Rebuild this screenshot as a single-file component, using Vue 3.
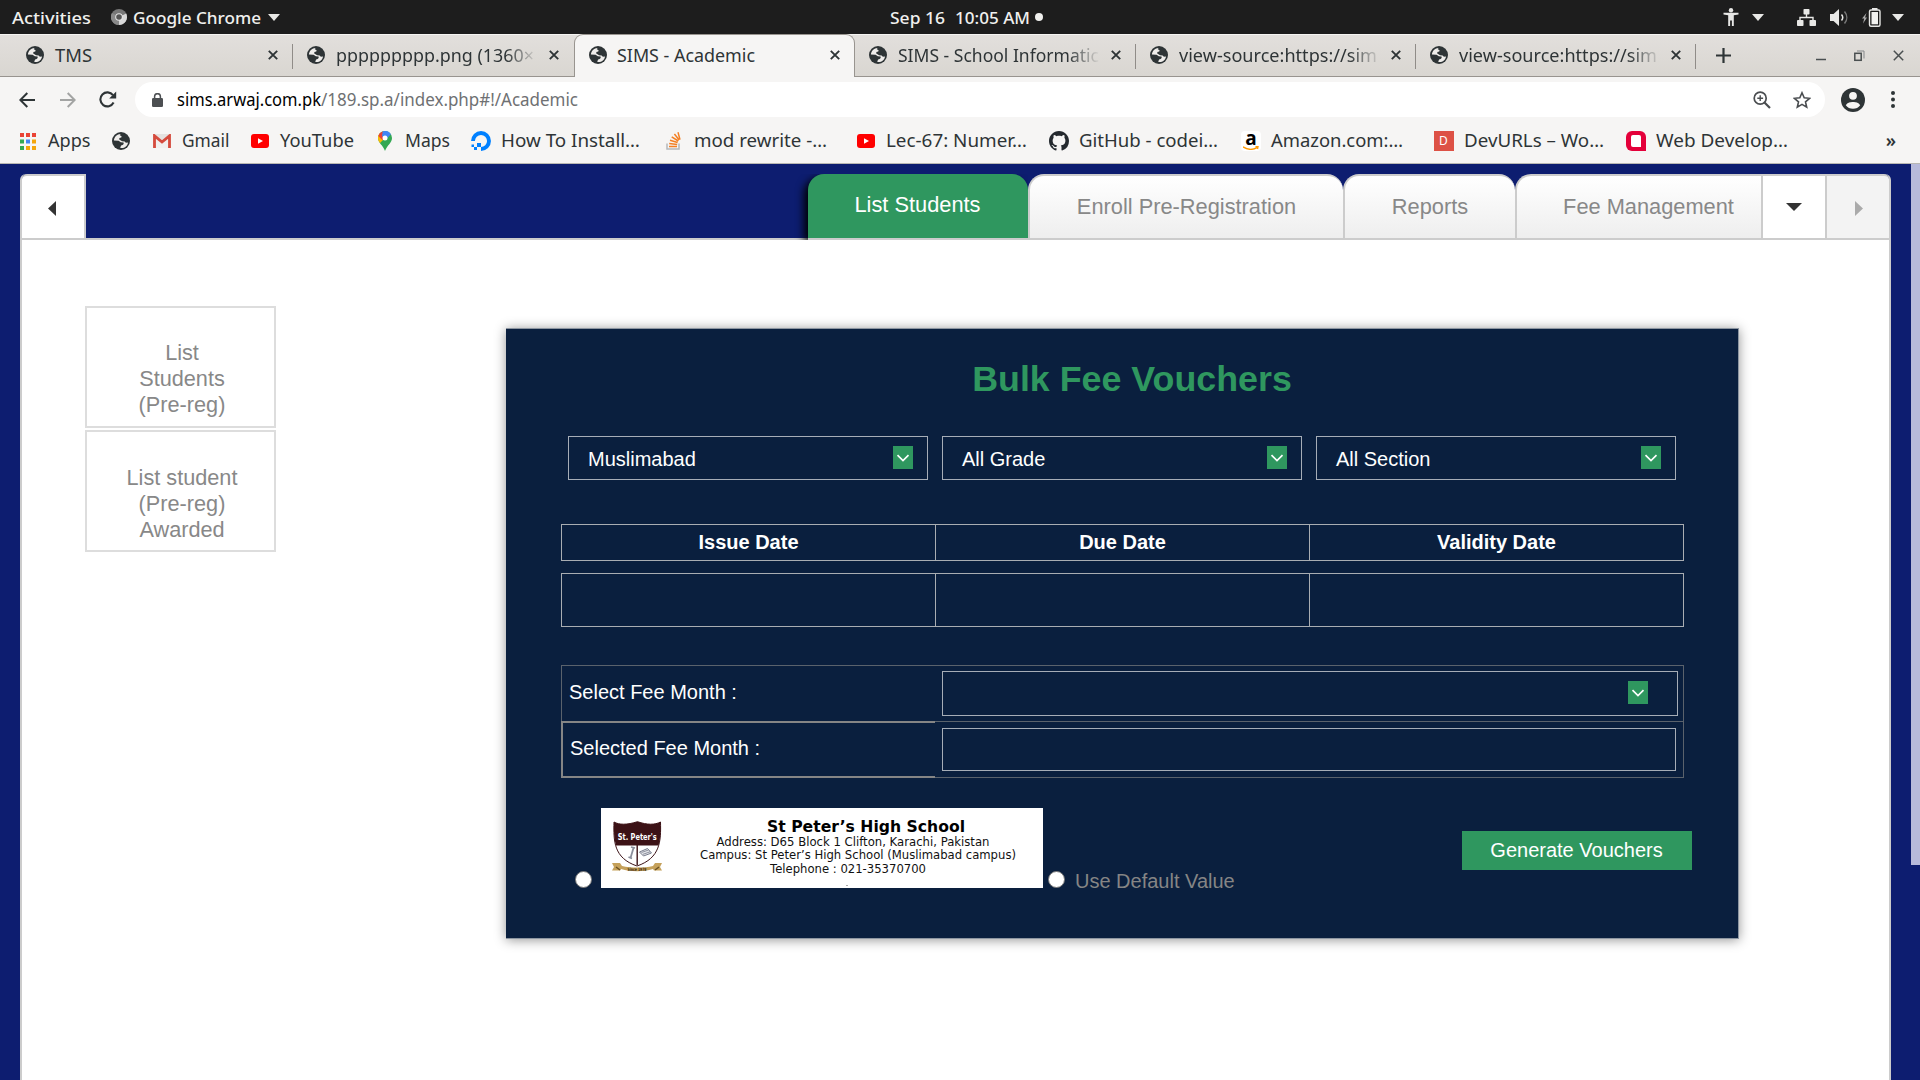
<script setup>
import { h } from 'vue'

// Text run with a fixed advance width, so labels keep the desktop font's metrics
const Run = (props) =>
  h('svg', { width: props.w, height: 20, class: 'run', overflow: 'visible' }, [
    h('text', { x: 0, y: props.y || 17, textLength: props.w, lengthAdjust: 'spacingAndGlyphs', fill: 'currentColor' }, props.t),
  ])
Run.props = ['w', 't', 'y']

const Globe = () =>
  h('svg', { width: 18, height: 18, viewBox: '0 0 18 18' }, [
    h('circle', { cx: 9, cy: 9, r: 9, fill: '#2e3436' }),
    h('path', { fill: '#efedeb', d: 'M8.6 1.9C5 2.1 2 5 1.9 8.6l4.7.1 2.2 1.6 2.7.1c.5.9 0 2-.9 2.5l-1.5.6-.9 2.3c3.7.9 7.4-1.700 7.800-5.400l-2.100.4-1.300-1.400-2.500-.1L8.500 8.300 7.200 7.600l.2-1.500 1.900-.5.3-1.400-1.800-.9z' }),
    h('path', { fill: '#2e3436', d: 'M2 9.500l3.200 1.500 1.500 3.900-1.300.500C3.400 14.200 2.200 12 2 9.500z' }),
  ])

const Chevron = () =>
  h('svg', { class: 'chev', width: 20, height: 23, viewBox: '0 0 20 23' }, [
    h('rect', { width: 20, height: 23, fill: '#2f975f' }),
    h('path', { d: 'M4.500 9.200L10 14.500l5.500-5.300', fill: 'none', stroke: '#fff', 'stroke-width': 1.700 }),
  ])

const tabs = [
  { t: 'TMS', w: 37 },
  { t: 'ppppppppp.png (1360×', w: 198, fade: true, sep: true },
  { t: 'SIMS - Academic', w: 138, active: true },
  { t: 'SIMS - School Informatic', w: 201, fade: true },
  { t: 'view-source:https://sim', w: 198, fade: true, sep: true },
  { t: 'view-source:https://sim', w: 198, fade: true, sep: true },
]

const marks = [
  { i: 'apps', t: 'Apps', w: 42.5 },
  { i: 'globe' },
  { i: 'gmail', t: 'Gmail', w: 47.5 },
  { i: 'yt', t: 'YouTube', w: 74 },
  { i: 'maps', t: 'Maps', w: 45 },
  { i: 'do', t: 'How To Install…', w: 139, cut: true },
  { i: 'so', t: 'mod rewrite -…', w: 133, cut: true },
  { i: 'yt', t: 'Lec-67: Numer…', w: 141, cut: true },
  { i: 'gh', t: 'GitHub - codei…', w: 139, cut: true },
  { i: 'amz', t: 'Amazon.com:…', w: 132, cut: true },
  { i: 'dev', t: 'DevURLs – Wo…', w: 140, cut: true },
  { i: 'web', t: 'Web Develop…', w: 132, cut: true },
]
const appDots = ['#ea4335', '#ea4335', '#ea4335', '#34a853', '#4285f4', '#f4a60b', '#34a853', '#f4a60b', '#f4a60b']
const filters = ['Muslimabad', 'All Grade', 'All Section']
const dates = ['Issue Date', 'Due Date', 'Validity Date']
</script>

<template>
  <div class="screen">
    <header class="topbar">
      <Run class="activities" :w="79" t="Activities" />
      <svg class="chrome" width="16" height="16" viewBox="0 0 16 16">
        <circle cx="8" cy="8" r="8" fill="#777" />
        <path d="M8 8L15.200 4.500A8 8 0 0 1 8 16z" fill="#d8d8d8" />
        <path d="M8 8L1 4A8 8 0 0 0 8 16z" fill="#8a8a8a" />
        <circle cx="8" cy="8" r="3.800" fill="#e4e4e4" />
        <circle cx="8" cy="8" r="2.800" fill="#555" />
      </svg>
      <Run :w="128" t="Google Chrome" />
      <svg class="tri first" width="12" height="7"><path d="M0 0h12L6 7z" fill="#e8e8e6" /></svg>
      <div class="clock">
        <Run :w="55" t="Sep 16" />
        <Run :w="75" t="10:05 AM" />
        <i class="dot"></i>
      </div>
      <div class="tray">
        <svg width="16" height="18" viewBox="0 0 16 18" fill="#e8e8e6">
          <circle cx="8" cy="2.200" r="2.200" /><path d="M0.500 4.800h15v1.800l-4.700.600V18H8.900v-5.500H7.100V18H5.200V7.200L.5 6.600z" />
        </svg>
        <svg class="tri" width="12" height="7"><path d="M0 0h12L6 7z" fill="#e8e8e6" /></svg>
        <svg class="net" width="19" height="17" viewBox="0 0 19 17" fill="#e8e8e6">
          <rect x="6.500" width="6" height="5.500" rx=".8" /><rect y="11" width="6.500" height="6" rx=".8" /><rect x="12.500" y="11" width="6.500" height="6" rx=".8" />
          <path d="M9.500 5v3.500M3 11V8.500h13V11" fill="none" stroke="#e8e8e6" stroke-width="1.400" />
        </svg>
        <svg class="vol" width="19" height="17" viewBox="0 0 19 17">
          <path d="M0 5h3.500L9 0v17l-5.500-5H0z" fill="#e8e8e6" />
          <path d="M11.500 5.500c1.500 1.800 1.500 4.200 0 6" fill="none" stroke="#e8e8e6" stroke-width="1.500" />
          <path d="M14.500 2.500c3 3.600 3 8.400 0 12" fill="none" stroke="#777" stroke-width="1.500" />
        </svg>
        <svg class="bat" width="19" height="19" viewBox="0 0 19 19">
          <path d="M4.500 5L0 10.500h2.200L1 15.500 5 9.500H3z" fill="#aaa" />
          <rect x="7.500" y="2" width="10.500" height="16.300" rx="1.500" fill="none" stroke="#e8e8e6" stroke-width="1.400" />
          <rect x="10" y="0" width="5.500" height="2" fill="#e8e8e6" /><rect x="9.500" y="4" width="6.500" height="12.300" fill="#f2f2f0" />
        </svg>
        <svg class="tri" width="12" height="7"><path d="M0 0h12L6 7z" fill="#e8e8e6" /></svg>
      </div>
    </header>

    <nav class="tabstrip">
      <div v-for="(tab, n) in tabs" :key="n" class="tab" :class="{ active: tab.active, sep: tab.sep }">
        <Globe />
        <div class="tab-title" :class="{ fade: tab.fade }"><Run :w="tab.w" :t="tab.t" /></div>
        <svg class="x" width="10" height="10" viewBox="0 0 10 10"><path d="M.8.8l8.400 8.400M9.200.8L.8 9.200" stroke="#2e3436" stroke-width="1.900" /></svg>
      </div>
      <div class="newtab">
        <svg width="15" height="15" viewBox="0 0 15 15"><path d="M7.500 0v15M0 7.500h15" stroke="#2e3436" stroke-width="2.200" /></svg>
      </div>
      <div class="winbtns">
        <svg width="10" height="14"><path d="M0 10.500h10" stroke="#4a4f50" stroke-width="1.500" /></svg>
        <svg width="11" height="12" viewBox="0 0 11 12" fill="none" stroke="#4a4f50"><rect x=".8" y="3.300" width="6.400" height="7" stroke-width="1.500" /><path d="M3 1h7v7.500" stroke="#85888a" /></svg>
        <svg width="11" height="11" viewBox="0 0 11 11"><path d="M.8.8l9.400 9.400M10.200.8L.8 10.200" stroke="#4a4f50" stroke-width="1.500" /></svg>
      </div>
    </nav>

    <div class="toolbar">
      <svg width="16" height="16" viewBox="0 0 16 16" fill="none" stroke="#2e3436" stroke-width="2"><path d="M16 8H1.500M8.300 1L1.300 8l7 7" /></svg>
      <svg class="fwd" width="16" height="16" viewBox="0 0 16 16" fill="none" stroke="#a3a4a3" stroke-width="2"><path d="M0 8h14.500M7.700 1l7 7-7 7" /></svg>
      <svg class="reload" width="18" height="17" viewBox="0 0 18 17"><path d="M14.600 11.600a7 7 0 1 1-.6-7.400" fill="none" stroke="#2e3436" stroke-width="2.100" /><path d="M17.200.5v7h-7z" fill="#2e3436" /></svg>
      <div class="omnibox">
        <svg width="11" height="14" viewBox="0 0 11 14"><rect y="5" width="11" height="9" rx="1.300" fill="#4c4f52" /><path d="M2.600 6V3.600a2.900 2.900 0 0 1 5.800 0V6" fill="none" stroke="#4c4f52" stroke-width="1.500" /></svg>
        <div class="url"><Run class="host" :w="144" :y="16" t="sims.arwaj.com.pk" /><Run class="path" :w="257" :y="16" t="/189.sp.a/index.php#!/Academic" /></div>
        <svg class="mag" width="18" height="18" viewBox="0 0 18 18" fill="none" stroke="#4a4d50" stroke-width="1.700"><circle cx="7.200" cy="7.200" r="6" /><path d="M11.500 11.500l5.500 5.500" stroke-width="2.200" /><path d="M7.200 4.300v5.800M4.300 7.200h5.800" stroke-width="1.400" /></svg>
        <svg width="18" height="18" viewBox="0 0 18 18"><path d="M9 1.800l2.200 5 5.400.5-4.100 3.600 1.200 5.300L9 13.400l-4.700 2.800 1.200-5.300-4.100-3.600 5.400-.5z" fill="none" stroke="#4a4d50" stroke-width="1.600" /></svg>
      </div>
      <svg class="avatar" width="24" height="24" viewBox="0 0 24 24"><circle cx="12" cy="12" r="12" fill="#2e3436" /><circle cx="12" cy="7.800" r="3.900" fill="#f6f5f4" /><path d="M4.800 17.300c1.200-2.800 4.500-3.400 7.200-3.400s6 .6 7.200 3.400c-1.700 2.400-4.300 3.500-7.200 3.500s-5.500-1.100-7.200-3.500z" fill="#f6f5f4" /></svg>
      <svg class="dots" width="4" height="17" fill="#2e3436"><circle cx="2" cy="2" r="2" /><circle cx="2" cy="8.500" r="2" /><circle cx="2" cy="15" r="2" /></svg>
    </div>

    <div class="bookmarks">
      <div v-for="(m, n) in marks" :key="n" class="mark">
        <span class="ico">
          <svg v-if="m.i === 'apps'" width="16" height="17" viewBox="0 0 16 17"><rect v-for="(c, k) in appDots" :key="k" :x="(k % 3) * 6" :y="Math.floor(k / 3) * 6.5" width="4" height="4" :fill="c" /></svg>
          <Globe v-else-if="m.i === 'globe'" />
          <svg v-else-if="m.i === 'gmail'" width="18" height="14" viewBox="0 0 18 14"><rect width="18" height="14" rx="1" fill="#e4e2e0" /><path d="M3 14V4l6 5 6-5v10" fill="#f1efee" /><path d="M1.500 14V1.800L9 8l7.500-6.200V14" fill="none" stroke="#d54b3d" stroke-width="2.800" /></svg>
          <svg v-else-if="m.i === 'yt'" width="18" height="14" viewBox="0 0 18 14"><rect width="18" height="14" rx="3" fill="#f00" /><path d="M7 4.200v5.600L12 7z" fill="#fff" /></svg>
          <svg v-else-if="m.i === 'maps'" width="14" height="20" viewBox="0 0 14 20"><path d="M7 0a7 7 0 0 0-7 7c0 5 5 7 7 13 2-6 7-8 7-13a7 7 0 0 0-7-7z" fill="#34a853" /><path d="M1.600 2.500L7 7l-5 5C.8 10.500 0 9 0 7a7 7 0 0 1 1.600-4.500z" fill="#fbbc04" /><path d="M1.600 2.500A7 7 0 0 1 4.700.4L7 6 4.300 9 .3 5z" fill="#ea4335" /><path d="M4.700.4a7 7 0 0 1 8.200 2.800L7.500 9 4 5z" fill="#4285f4" /><circle cx="7" cy="7" r="2.500" fill="#fff" /></svg>
          <svg v-else-if="m.i === 'do'" width="20" height="20" viewBox="0 0 20 20"><path d="M10 18a8 8 0 1 0-8-8" fill="none" stroke="#0080ff" stroke-width="3.900" /><path d="M6 12h4v4H6zM3 16h3v3H3zM.5 13.500H3V16H.5z" fill="#0080ff" /></svg>
          <svg v-else-if="m.i === 'so'" width="16" height="18" viewBox="0 0 16 18" fill="none"><path d="M1 11.500V17h12v-5.500" stroke="#b5b8bb" stroke-width="1.500" /><path d="M3 14.500h8M3.200 11.600l8 .8M4 8.300l7.600 2.200M5.700 4.900l6.600 4.100M8.400 2l4.800 6M12 .2l2 7.400" stroke="#f48024" stroke-width="1.500" /></svg>
          <svg v-else-if="m.i === 'gh'" width="20" height="20" viewBox="0 0 16 16"><path fill="#24292e" d="M8 0C3.580 0 0 3.580 0 8c0 3.540 2.290 6.530 5.470 7.590.4.070.55-.17.55-.38 0-.19-.01-.82-.01-1.490-2.010.37-2.530-.49-2.690-.94-.09-.23-.48-.94-.82-1.130-.28-.15-.68-.52-.01-.53.63-.01 1.080.58 1.230.82.72 1.210 1.870.87 2.330.66.070-.52.28-.87.51-1.070-1.780-.2-3.640-.89-3.640-3.950 0-.87.31-1.590.82-2.150-.08-.2-.36-1.020.08-2.120 0 0 .67-.21 2.200.82.64-.18 1.320-.27 2-.27s1.360.09 2 .27c1.530-1.040 2.200-.82 2.200-.82.44 1.100.16 1.920.08 2.120.51.56.82 1.270.82 2.150 0 3.070-1.870 3.750-3.650 3.950.29.25.54.73.54 1.480 0 1.070-.01 1.930-.01 2.200 0 .21.15.46.55.38A8.010 8.010 0 0 0 16 8c0-4.420-3.580-8-8-8z" /></svg>
          <span v-else-if="m.i === 'amz'" class="amz"><b>a</b><svg width="16" height="4" viewBox="0 0 16 4"><path d="M0 .8c4.500 3 10 3 14 .8M12.500.5h2.500l-.5 2.500" fill="none" stroke="#f90" stroke-width="1.400" /></svg></span>
          <span v-else-if="m.i === 'dev'" class="dev">D</span>
          <svg v-else width="20" height="20" viewBox="0 0 20 20"><path d="M6 0h8a6 6 0 0 1 6 6v14H6a6 6 0 0 1-6-6V6a6 6 0 0 1 6-6z" fill="#e4003a" /><path d="M7 4h6a2 2 0 0 1 2 2v10H7a2 2 0 0 1-2-2V6a2 2 0 0 1 2-2z" fill="#fff" /></svg>
        </span>
        <span v-if="m.t" class="mark-label" :class="{ cut: m.cut }"><Run :w="m.w" :y="16" :t="m.t" /></span>
      </div>
      <span class="more">»</span>
    </div>

    <main class="page">
      <div class="panel">
        <div class="ptabs">
          <div class="pbtn prev"><svg width="8" height="15"><path d="M8 0v15L0 7.500z" fill="#333" /></svg></div>
          <div class="ptab on">List Students</div>
          <div class="ptab enroll">Enroll Pre-Registration</div>
          <div class="ptab reports">Reports</div>
          <div class="ptab fee">Fee Management</div>
          <div class="pbtn drop"><svg width="16" height="8"><path d="M0 0h16L8 8z" fill="#333" /></svg></div>
          <div class="pbtn next"><svg width="8" height="15"><path d="M0 0v15l8-7.500z" fill="#aaa" /></svg></div>
        </div>
        <div class="pbody">
          <aside>
            <div class="side">List<br />Students<br />(Pre-reg)</div>
            <div class="side">List student<br />(Pre-reg)<br />Awarded</div>
          </aside>
          <section class="card">
            <h1>Bulk Fee Vouchers</h1>
            <div class="filters">
              <div v-for="f in filters" :key="f" class="select">{{ f }}<Chevron /></div>
            </div>
            <div class="grid head"><div v-for="d in dates" :key="d">{{ d }}</div></div>
            <div class="grid vals"><div v-for="d in dates" :key="d"></div></div>
            <div class="fees">
              <div class="frow"><div class="flabel">Select Fee Month :</div><div class="fcell"><div class="fsel"><Chevron /></div></div></div>
              <div class="frow"><div class="flabel thick">Selected Fee Month :</div><div class="fcell"><div class="finp"></div></div></div>
            </div>
            <div class="foot">
              <i class="radio"></i>
              <svg class="banner" width="441.500" height="80" viewBox="0 0 441.500 80">
                <rect width="442" height="80" fill="#fff" />
                <path d="M13 14c5 3 13 3 23.500-.3C46 17 54 17 59.500 14c.5 19 0 36-23.500 44C12.500 50 12.500 33 13 14z" fill="#fff" stroke="#3c1216" stroke-width="1" />
                <path d="M13 14c5 3 13 3 23.500-.3C46 17 54 17 59.500 14c.3 9 0 17-2 23.500H15C13 31 12.700 23 13 14z" fill="#3c1216" />
                <path d="M36.200 37v20" stroke="#3c1216" stroke-width="1.400" />
                <path d="M32.500 40l-3 10M30 39l4 1M27.500 49l3.500 1.500" stroke="#8b8f9c" stroke-width="1.800" fill="none" />
                <path d="M38.500 44l8-3.500 4 4.500-8 3z" fill="#e5e6ea" stroke="#777c8c" stroke-width="1" />
                <path d="M40.500 44.500l7-2.500M42 46.300l7-2.500" stroke="#777c8c" stroke-width=".8" />
                <path d="M11 55h8l2 3c9 2 22 2 31 0l2-3h7l-2 4 2 3.500h-8l-1-1.500c-10 3-22 3-32 0l-1 1.500h-8l2-3.500z" fill="#c5a15b" />
                <path d="M15 59l4 3M54 62l4-3" stroke="#6b5122" stroke-width="1.500" />
                <text x="36.300" y="31.500" class="crest" textLength="39" lengthAdjust="spacingAndGlyphs">St. Peter's</text>
                <text x="36" y="62.800" class="since" textLength="19" lengthAdjust="spacingAndGlyphs">Since 1978</text>
                <text x="265" y="24" class="school" textLength="198" lengthAdjust="spacingAndGlyphs">St Peter’s High School</text>
                <text x="252" y="37.500" class="line" textLength="273" lengthAdjust="spacingAndGlyphs">Address: D65 Block 1 Clifton, Karachi, Pakistan</text>
                <text x="257" y="51.400" class="line" textLength="316" lengthAdjust="spacingAndGlyphs">Campus: St Peter’s High School (Muslimabad campus)</text>
                <text x="247" y="65.300" class="line" textLength="156" lengthAdjust="spacingAndGlyphs">Telephone : 021-35370700</text>
                <rect x="245" y="77" width="2" height="1" fill="#aaa" />
              </svg>
              <i class="radio second"></i>
              <span class="default">Use Default Value</span>
              <button class="go">Generate Vouchers</button>
            </div>
          </section>
        </div>
      </div>
      <div class="thumb"></div>
    </main>
  </div>
</template>

<style>
body { margin: 0; overflow: hidden; }
</style>

<style scoped>
* { box-sizing: border-box; }
svg { display: block; flex: none; }
.screen { width: 1920px; height: 1080px; overflow: hidden; display: flex; flex-direction: column; font-family: "Noto Sans", sans-serif; font-size: 18px; color: #2e3436; }
.topbar { height: 34px; flex: none; background: #1d1d1d; color: #f0f0ee; display: flex; align-items: center; padding-left: 12px; font-size: 15.5px; font-weight: 500; }
.chrome { margin: 0 6px 0 20px; }
.tri.first { margin-left: 7px; }
.clock { margin-left: 610px; display: flex; align-items: center; gap: 10px; }
.dot { width: 8px; height: 8px; border-radius: 50%; background: #f0f0ee; margin-left: -5px; }
.tray { margin-left: auto; padding-right: 16px; display: flex; align-items: center; }
.tray .tri { margin-left: 13px; }
.net { margin-left: 33px; }
.vol { margin-left: 14px; }
.bat { margin-left: 13px; }
.bat + .tri { margin-left: 11px; }

.tabstrip { height: 43px; flex: none; background: linear-gradient(#e2dfdc, #d9d6d1); border-top: 1px solid #f5f4f2; border-bottom: 1px solid #98948f; display: flex; padding-left: 12px; }
.tab { position: relative; width: 281px; display: flex; align-items: center; padding: 0 15px 1px 14px; }
.tab-title { width: 202px; height: 26px; padding-top: 3px; margin-left: 11px; }
.fade { -webkit-mask-image: linear-gradient(90deg, #000 84%, transparent 100%); mask-image: linear-gradient(90deg, #000 84%, transparent 100%); }
.x { margin-left: auto; }
.tab.sep::before { content: ""; position: absolute; left: -1px; top: 9px; width: 1px; height: 25px; background: #908c88; }
.tab:nth-child(n+5) { width: 280px; }
.tab:nth-child(6)::after { content: ""; position: absolute; right: 0; top: 9px; width: 1px; height: 25px; background: #908c88; }
.tab.active { background: #f6f5f4; border: 1px solid #98948f; border-bottom: 0; border-radius: 9px 9px 0 0; margin: -1px 0; padding: 0 14px 2px 14px; }
.tab.active .tab-title { margin-left: 10px; }
.newtab { width: 15px; margin-left: 20px; display: flex; align-items: center; }
.winbtns { margin-left: auto; padding-right: 16px; display: flex; align-items: center; gap: 28px; }

.toolbar { height: 45px; flex: none; background: #f6f5f4; display: flex; align-items: center; padding-left: 19px; }
.fwd { margin-left: 25px; }
.reload { margin: 0 18px 0 23px; }
.omnibox { width: 1690px; height: 35px; border-radius: 18px; background: #fff; display: flex; align-items: center; padding: 0 14px 0 17px; font-size: 17.5px; }
.url { margin-left: 14px; display: flex; flex: 1; }
.host { color: #000; }
.path { color: #6f7173; }
.mag { margin-right: 22px; }
.avatar { margin-left: 16px; }
.dots { margin-left: 26px; }

.bookmarks { height: 42px; flex: none; background: #f6f5f4; border-bottom: 1px solid #b9b7b3; display: flex; gap: 21px; padding: 0 0 3px 18px; align-items: center; }
.mark { display: flex; align-items: center; }
.mark:first-child { margin-right: -1px; }
.ico { width: 20px; display: flex; justify-content: center; }
.mark-label { margin-left: 10px; }
.mark-label.cut { width: 141.500px; }
.amz { width: 20px; height: 20px; border-radius: 4px; background: #fff; display: flex; flex-direction: column; align-items: center; }
.amz b { color: #000; font: bold 19px/15px "Open Sans", sans-serif; height: 15px; }
.dev { width: 20px; height: 20px; background: #dd5145; color: #fff; font-size: 12px; line-height: 20px; text-align: center; }
.more { margin-left: auto; padding-right: 24px; font-size: 18px; font-weight: 600; line-height: 20px; margin-top: -3px; }

.page { height: 916px; background: #0d1d70; display: flex; padding: 10px 0 0 20px; font-family: "Liberation Sans", Arial, sans-serif; }
.panel { width: 1871px; display: flex; flex-direction: column; }
.ptabs { height: 66px; display: flex; border-bottom: 2px solid #ccc; border-left: 2px solid #ccc; border-right: 2px solid #ccc; border-radius: 6px 6px 0 0; font-size: 21.800px; color: #888; }
.pbtn { display: flex; align-items: center; justify-content: center; background: #fff; border-top: 2px solid #ccc; }
.prev { width: 64px; border-right: 2px solid #ccc; border-radius: 5px 0 0 0; margin-right: 722px; padding: 3px 2px 0 0; }
.ptab { display: flex; align-items: center; justify-content: center; white-space: nowrap; border: 2px solid #ccc; border-bottom: 0; border-right: 0; border-radius: 16px 16px 0 0; background: linear-gradient(#fff, #eee); }
.ptab.on { position: relative; width: 220px; border: 0; background: #2f975f; color: #fff; padding: 0 1px 3px 0; box-shadow: -4px 4px 9px #000; clip-path: inset(0 0 -2px -20px); }
/* keeps the panel's top line visible under the selected tab */
.ptab.on::after { content: ""; position: absolute; left: 0; right: 0; bottom: -2px; height: 2px; background: #ccc; }
.enroll { width: 315px; padding-left: 0; }
.reports { width: 172px; }
.fee { width: 246px; border-radius: 16px 0 0 0; padding-left: 19px; }
.drop { width: 66px; border-left: 2px solid #ccc; border-right: 2px solid #ccc; }
.next { flex: 1; background: #f3f3f3; border-radius: 0 5px 0 0; padding-left: 1px; padding-top: 3px; }
.pbody { flex: 1; background: #fff; border: 2px solid #ccc; border-width: 0 2px; display: flex; }
aside { width: 191px; margin: 66px 0 0 63px; }
.side { height: 122px; border: 2px solid #ddd; padding: 32px 0 0 3px; margin-bottom: 2px; font-size: 21.700px; line-height: 26px; color: #888; text-align: center; }
.side + .side { padding-top: 33px; }
.card { width: 1233px; height: 611px; margin: 88px 0 0 230px; background: #0a1f3e; border: 1px solid #8d96a1; border-left: 0; box-shadow: 0 1px 11px rgba(0, 0, 0, .42); color: #fff; font-size: 20px; }
h1 { margin: 30px 0 0 20px; text-align: center; font-size: 35.800px; line-height: 40px; color: #2f975f; }
.filters { display: flex; gap: 14px; margin: 37px 0 0 62px; }
.select { width: 360px; height: 44px; border: 1px solid #a6adb7; padding: 2px 14px 0 19px; display: flex; align-items: center; justify-content: space-between; }
.select .chev { margin-top: -3px; }
.grid { display: flex; width: 1123px; margin-left: 55px; border: 1px solid #a9adb2; }
.grid div { flex: 1; display: flex; align-items: center; justify-content: center; font-weight: bold; }
.grid div + div { border-left: 1px solid #a9adb2; }
.head { height: 37px; margin-top: 44px; }
.head div { padding-bottom: 1px; }
.vals { height: 54px; margin-top: 12px; }
.fees { width: 1123px; margin: 38px 0 0 55px; }
.frow { display: flex; height: 56px; }
.frow + .frow { height: 57px; }
.flabel { width: 374px; display: flex; align-items: center; padding: 0 0 2px 7px; border: 1px solid #5a626c; border-right: 0; border-bottom: 0; }
.flabel.thick { border: 2px solid #858585; border-right: 0; padding-left: 7px; padding-bottom: 2px; }
.fcell { flex: 1; border: 1px solid #5a626c; border-left: 0; border-bottom: 0; padding: 5px 0 0 7px; }
.frow + .frow .fcell { border-bottom: 1px solid #5a626c; padding-top: 6px; }
.fsel { width: 736px; height: 45px; border: 1px solid #a6adb7; display: flex; justify-content: flex-end; padding: 9px 29px 0 0; }
.finp { width: 734px; height: 43px; border: 1px solid #a6adb7; }
.foot { display: flex; align-items: flex-start; margin: 30px 0 0 69px; }
.radio { width: 17px; height: 17px; border-radius: 50%; background: #fff; border: 1px solid #777; margin-top: 63px; }
.radio.second { margin-left: 5.500px; }
.banner { margin-left: 9px; }
.default { margin: 62px 0 0 10px; line-height: 22px; color: #858585; }
.go { margin: 23px 46.500px 0 auto; width: 230px; height: 39px; border: 0; padding: 0; background: #2f975f; color: #fff; font: 20px "Liberation Sans", Arial, sans-serif; }
.thumb { width: 9px; height: 701px; margin: -10px 0 0 20px; background: #b7badb; }
.banner text { text-anchor: middle; font-family: "DejaVu Sans", sans-serif; fill: #111; }
.banner .crest { font-size: 8.500px; font-weight: bold; fill: #fff; }
.banner .since { font-size: 4.500px; font-weight: bold; fill: #3c2a10; }
.banner .school { font-size: 15.500px; font-weight: bold; fill: #000; }
.banner .line { font-size: 11.800px; }
</style>
